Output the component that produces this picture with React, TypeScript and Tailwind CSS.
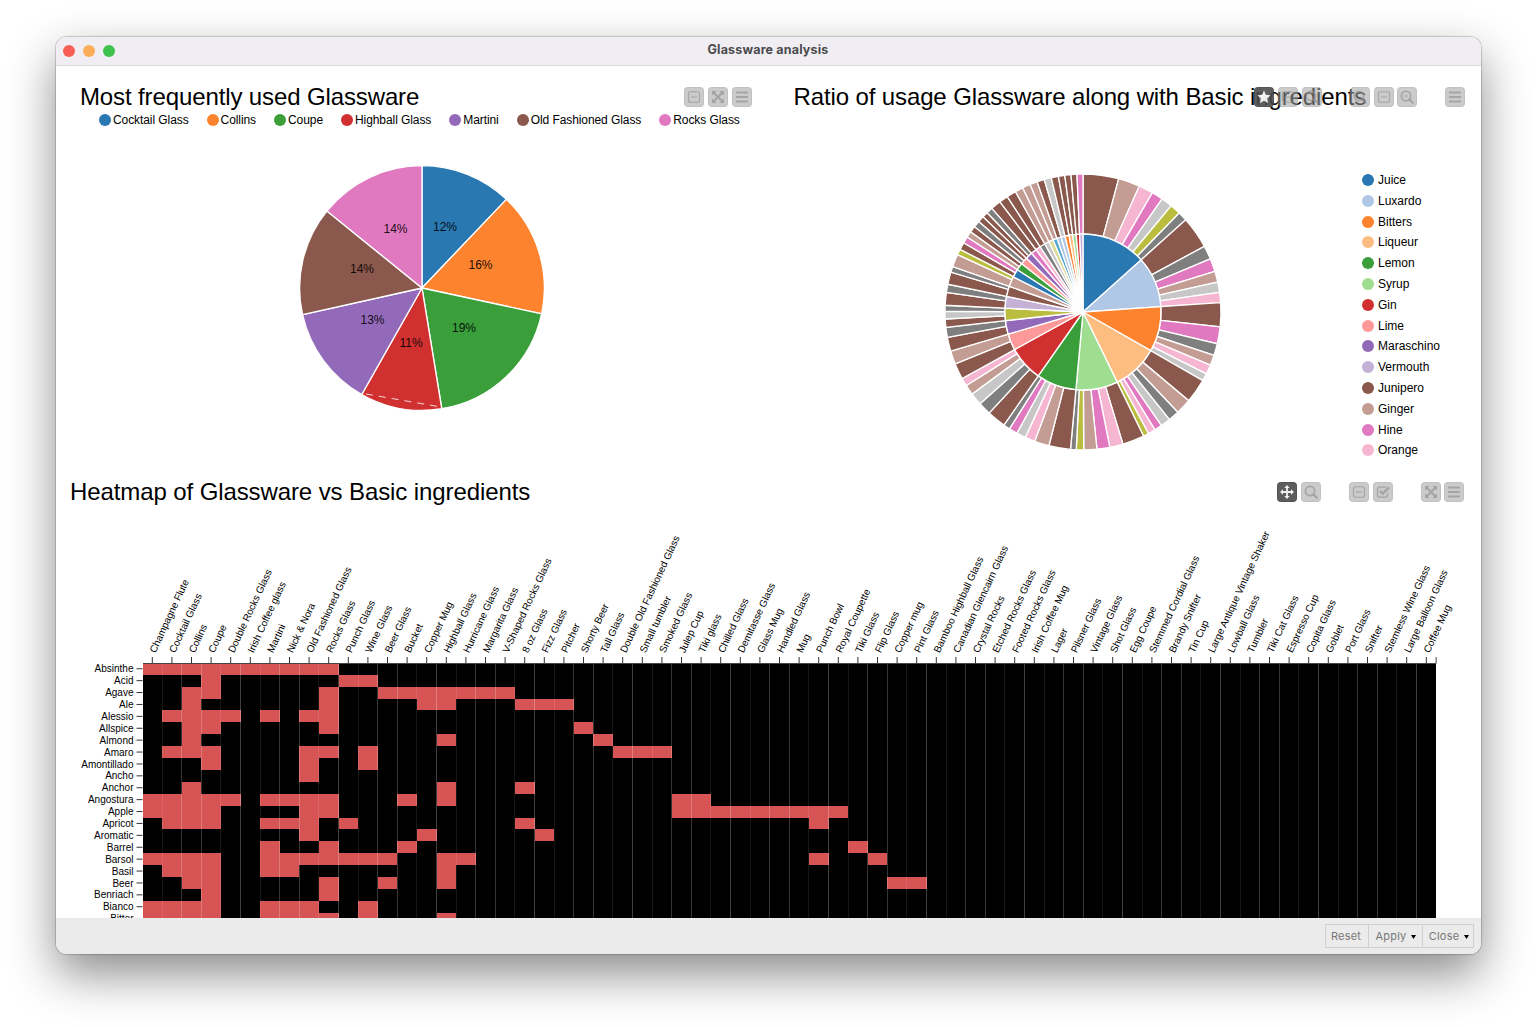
import type { ReactNode } from "react";

const C = {
  blue: "#2978b1",
  lightBlue: "#b0c8e6",
  orange: "#fd832e",
  peach: "#fdbc80",
  green: "#3a9f3a",
  lightGreen: "#9fde90",
  red: "#d13030",
  salmon: "#fd9a99",
  purple: "#9369b9",
  lilac: "#c5b1d6",
  brown: "#8a584c",
  tan: "#c39c94",
  pink: "#e079c0",
  lightPink: "#f6b6d2",
  gray: "#7f7f7f",
  lightGray: "#c7c7c7",
  olive: "#bbbd3f",
  khaki: "#dbdb93",
  cyan: "#53a8d2",
};

type Slice = { to: number; color: string };

const glassware = [
  { name: "Cocktail Glass", to: 43.6, color: C.blue, label: "12%", x: 148, y: 64 },
  { name: "Collins", to: 102.2, color: C.orange, label: "16%", x: 183.5, y: 102.4 },
  { name: "Coupe", to: 170.7, color: C.green, label: "19%", x: 167, y: 165 },
  { name: "Highball Glass", to: 209.5, color: C.red, label: "11%", x: 114, y: 180.5 },
  { name: "Martini", to: 257.4, color: C.purple, label: "13%", x: 75.5, y: 157.3 },
  { name: "Old Fashioned Glass", to: 309, color: C.brown, label: "14%", x: 65, y: 106.4 },
  { name: "Rocks Glass", to: 360, color: C.pink, label: "14%", x: 98.5, y: 66 },
];

const ingredients = [
  { name: "Juice", color: C.blue },
  { name: "Luxardo", color: C.lightBlue },
  { name: "Bitters", color: C.orange },
  { name: "Liqueur", color: C.peach },
  { name: "Lemon", color: C.green },
  { name: "Syrup", color: C.lightGreen },
  { name: "Gin", color: C.red },
  { name: "Lime", color: C.salmon },
  { name: "Maraschino", color: C.purple },
  { name: "Vermouth", color: C.lilac },
  { name: "Junipero", color: C.brown },
  { name: "Ginger", color: C.tan },
  { name: "Hine", color: C.pink },
  { name: "Orange", color: C.lightPink },
];

const toSlices = (list: [number, string][]): Slice[] => list.map(([to, color]) => ({ to, color }));

const innerRing = toSlices([
  [48.1, C.blue], [86.1, C.lightBlue], [119.7, C.orange], [154, C.peach], [185.2, C.lightGreen],
  [215, C.green], [241.2, C.red], [253.5, C.salmon], [263.6, C.purple], [272.8, C.olive],
  [281.5, C.lilac], [289.2, C.brown], [296.8, C.tan], [302.8, C.blue], [308.3, C.green],
  [313.6, C.salmon], [318.8, C.purple], [323, C.pink], [326.7, C.lightPink], [330.7, C.gray],
  [334.1, C.lightGray], [337.5, C.khaki], [340.6, C.cyan], [343.7, C.lightBlue], [346.7, C.lightBlue],
  [349.7, C.orange], [352.4, C.peach], [355, C.lightGreen], [357.5, C.red], [360, C.lilac],
]);

const outerRing = toSlices([
  [15, C.brown], [24.1, C.tan], [30.2, C.lightPink], [35, C.pink], [39.7, C.lightGray], [44.2, C.olive],
  [48.1, C.gray], [61.6, C.brown], [67.4, C.gray], [72.9, C.pink], [77.5, C.tan], [81.8, C.lightGray],
  [86.1, C.lightPink], [96.2, C.brown], [103.3, C.pink], [108.3, C.gray], [112.6, C.tan],
  [116.6, C.lightPink], [119.8, C.lightGray], [130, C.brown], [136.6, C.tan], [141.2, C.gray],
  [145.4, C.lightGray], [148.6, C.pink], [151.7, C.lightPink], [154, C.olive], [163.2, C.brown],
  [168.8, C.lightPink], [174.2, C.pink], [179.7, C.tan], [182.8, C.olive], [185.2, C.gray],
  [194.3, C.brown], [200.5, C.tan], [204.7, C.lightPink], [208.6, C.lightGray], [212.2, C.pink],
  [215, C.gray], [222.9, C.brown], [228.3, C.gray], [233.5, C.lightGray], [237.8, C.tan],
  [241.2, C.lightPink], [247.9, C.brown], [253.5, C.tan], [259.4, C.brown], [263.6, C.gray],
  [267.1, C.brown], [270.3, C.lightGray], [272.8, C.gray], [278.2, C.brown], [281.6, C.gray],
  [286.8, C.brown], [289.2, C.gray], [294.6, C.tan], [297, C.olive], [300.1, C.brown], [302.9, C.pink],
  [305.5, C.tan], [308.2, C.brown], [311, C.gray], [313.6, C.brown], [316, C.brown], [318.7, C.gray],
  [323, C.brown], [326.7, C.brown], [330.7, C.brown], [334.1, C.tan], [337.5, C.tan], [340.6, C.tan],
  [343.7, C.brown], [346.7, C.lightGray], [349.7, C.brown], [352.4, C.brown], [355, C.brown],
  [357.5, C.brown], [360, C.pink],
]);

const columns = [
  "Champagne Flute", "Cocktail Glass", "Collins", "Coupe", "Double Rocks Glass", "Irish Coffee glass",
  "Martini", "Nick & Nora", "Old Fashioned Glass", "Rocks Glass", "Punch Glass", "Wine Glass",
  "Beer Glass", "Bucket", "Copper Mug", "Highball Glass", "Hurricane Glass", "Margarita Glass",
  "V-Shaped Rocks Glass", "8 oz Glass", "Fizz Glass", "Pitcher", "Shorty Beer", "Tall Glass",
  "Double Old Fashioned Glass", "Small tumbler", "Smoked Glass", "Julep Cup", "Tiki glass",
  "Chilled Glass", "Demitasse Glass", "Glass Mug", "Handled Glass", "Mug", "Punch Bowl",
  "Royal Coupette", "Tiki Glass", "Flip Glass", "Copper mug", "Pint Glass", "Bamboo Highball Glass",
  "Canadian Glencairn Glass", "Crystal Rocks", "Etched Rocks Glass", "Footed Rocks Glass",
  "Irish Coffee Mug", "Lager", "Pilsner Glass", "Vintage Glass", "Shot Glass", "Egg Coupe",
  "Stemmed Cordial Glass", "Brandy Snifter", "Tin Cup", "Large Antique Vintage Shaker",
  "Lowball Glass", "Tumbler", "Tiki Cat Glass", "Espresso Cup", "Copita Glass", "Goblet",
  "Port Glass", "Snifter", "Stemless Wine Glass", "Large Balloon Glass", "Coffee Mug",
];

// each row lists its filled cells as [first column, last column]
const rows: { name: string; cells: [number, number][] }[] = [
  { name: "Absinthe", cells: [[0, 9]] },
  { name: "Acid", cells: [[3, 3], [10, 11]] },
  { name: "Agave", cells: [[2, 3], [9, 9], [12, 18]] },
  { name: "Ale", cells: [[2, 2], [9, 9], [14, 15], [19, 21]] },
  { name: "Alessio", cells: [[1, 4], [6, 6], [8, 9]] },
  { name: "Allspice", cells: [[2, 3], [9, 9], [22, 22]] },
  { name: "Almond", cells: [[2, 2], [15, 15], [23, 23]] },
  { name: "Amaro", cells: [[1, 3], [8, 9], [11, 11], [24, 26]] },
  { name: "Amontillado", cells: [[3, 3], [8, 8], [11, 11]] },
  { name: "Ancho", cells: [[8, 8]] },
  { name: "Anchor", cells: [[2, 2], [15, 15], [19, 19]] },
  { name: "Angostura", cells: [[0, 4], [6, 9], [13, 13], [15, 15], [27, 28]] },
  { name: "Apple", cells: [[0, 3], [8, 9], [27, 35]] },
  { name: "Apricot", cells: [[1, 3], [6, 8], [10, 10], [19, 19], [34, 34]] },
  { name: "Aromatic", cells: [[8, 8], [14, 14], [20, 20]] },
  { name: "Barrel", cells: [[6, 6], [9, 9], [13, 13], [36, 36]] },
  { name: "Barsol", cells: [[0, 3], [6, 12], [15, 16], [34, 34], [37, 37]] },
  { name: "Basil", cells: [[1, 3], [6, 7], [15, 15]] },
  { name: "Beer", cells: [[2, 3], [9, 9], [12, 12], [15, 15], [38, 39]] },
  { name: "Benriach", cells: [[3, 3], [9, 9]] },
  { name: "Bianco", cells: [[0, 3], [6, 8], [11, 11]] },
  { name: "Bitter", cells: [[0, 3], [6, 9], [11, 11], [15, 15]] },
];

const point = (c: number, r: number, deg: number) => {
  const a = (deg * Math.PI) / 180;
  return `${(c + r * Math.sin(a)).toFixed(2)} ${(c - r * Math.cos(a)).toFixed(2)}`;
};

const arc = (c: number, r0: number, r1: number, from: number, to: number) =>
  `M${point(c, r0, from)} L${point(c, r1, from)} A${r1} ${r1} 0 0 1 ${point(c, r1, to)} L${point(c, r0, to)}` +
  (r0 > 0 ? ` A${r0} ${r0} 0 0 0 ${point(c, r0, from)}Z` : "Z");

const Ring = ({ slices, c, r0, r1 }: { slices: Slice[]; c: number; r0: number; r1: number }) => (
  <g stroke="#fff" strokeWidth="1.35">
    {slices.map((s, i) => (
      <path key={i} d={arc(c, r0, r1, i ? slices[i - 1].to : 0, s.to)} fill={s.color} />
    ))}
  </g>
);

const icons: Record<string, ReactNode> = {
  star: <path fill="currentColor" d="M7 .6l2 4.1 4.5.6-3.3 3.1.8 4.5L7 10.8l-4 2.1.8-4.5L.5 5.3 5 4.7z" />,
  minus: (
    <g fill="none" stroke="currentColor" strokeWidth="1.1">
      <rect x="1.5" y="1.8" width="11" height="10.4" rx="2" />
      <path d="M4 7h6" />
    </g>
  ),
  check: (
    <g fill="none" stroke="currentColor">
      <path strokeWidth="1.3" d="M11.5 8v2.2a2 2 0 01-2 2h-6a2 2 0 01-2-2v-6a2 2 0 012-2h6.5" />
      <path strokeWidth="2.4" d="M4 5.8l2.8 2.8L13 2.4" />
    </g>
  ),
  expand: (
    <g fill="currentColor">
      <path d="M1 1h4.6L1 5.6zM13 1v4.6L8.4 1zM1 13V8.4L5.6 13zM13 13H8.4L13 8.4z" />
      <path stroke="currentColor" strokeWidth="2" d="M3 3l8 8M11 3l-8 8" />
    </g>
  ),
  move: (
    <g fill="currentColor">
      <path d="M7 0l2.7 3H4.3zM7 14l2.7-3H4.3zM0 7l3-2.7v5.4zM14 7l-3-2.7v5.4z" />
      <path stroke="currentColor" strokeWidth="1.8" d="M7 2v10M2 7h10" />
    </g>
  ),
  search: (
    <g fill="none" stroke="currentColor">
      <circle cx="6" cy="6" r="4.6" strokeWidth="1.7" />
      <path strokeWidth="2.2" strokeLinecap="round" d="M9.7 9.7l3 3" />
    </g>
  ),
  zoomOut: (
    <g fill="none" stroke="currentColor">
      <circle cx="6" cy="6" r="4.7" strokeWidth="1.6" />
      <path strokeWidth="1.2" d="M3.8 6h4.4" />
      <path strokeWidth="2.2" strokeLinecap="round" d="M9.7 9.7l3 3" />
    </g>
  ),
  bars: <path stroke="currentColor" strokeWidth="1.9" d="M1 2.5h12M1 7h12M1 11.5h12" />,
};

const ToolButton = ({ icon, active }: { icon: string; active?: boolean }) => (
  <button
    className={
      active
        ? "flex size-5 items-center justify-center rounded-[4px] border border-black/10 bg-[#4c4c4c]/90 text-white/90"
        : "flex size-5 items-center justify-center rounded-[4px] border border-black/5 bg-[#a0a0a0]/55 text-[#909090]/65"
    }
  >
    <svg viewBox="0 0 14 14" className="size-[14px] shrink-0">{icons[icon]}</svg>
  </button>
);

const Toolbar = ({ groups, active }: { groups: string[][]; active?: string }) => (
  <div className="flex gap-7">
    {groups.map((group, g) => (
      <div key={g} className="flex gap-[3.8px]">
        {group.map((icon, i) => (
          <ToolButton key={i} icon={icon} active={icon === active} />
        ))}
      </div>
    ))}
  </div>
);

const UsagePie = () => (
  <section className="relative w-[712px] shrink-0">
    <h2 className="pt-[13px] pl-6 text-[24px] leading-9 tracking-[-0.12px] whitespace-nowrap">Most frequently used Glassware</h2>
    <div className="absolute top-[21px] right-[16.4px]">
      <Toolbar groups={[["minus", "expand", "bars"]]} />
    </div>
    <ul className="-mt-px flex gap-[18px] pl-[43px] text-[12px] leading-[10px] tracking-[-0.08px]">
      {glassware.map((g) => (
        <li key={g.name} className="flex items-center gap-[2px] whitespace-nowrap">
          <svg className="size-3" viewBox="0 0 12 12">
            <circle cx="6" cy="6" r="6" fill={g.color} />
          </svg>
          {g.name}
        </li>
      ))}
    </ul>
    <svg className="mt-[36.5px] ml-[241px] size-[250px]" viewBox="0 0 250 250">
      <Ring slices={glassware} c={125} r0={0} r1={122.4} />
      <path d="M69 231L144 244" stroke="#fff" strokeOpacity=".8" strokeDasharray="7 6" />
      <g fontSize="12" textAnchor="middle" fillOpacity=".9">
        {glassware.map((g) => (
          <text key={g.name} x={g.x} y={g.y + 3.5}>{g.label}</text>
        ))}
      </g>
    </svg>
  </section>
);

const RatioSunburst = () => (
  <section className="relative flex-1">
    <h2 className="pt-[13px] pl-[25.5px] text-[24px] leading-9 tracking-[-0.12px] whitespace-nowrap">
      Ratio of usage Glassware along with Basic ingredients
    </h2>
    <div className="absolute top-[21px] right-[15.6px]">
      <Toolbar groups={[["star", "minus", "search"], ["search", "minus", "zoomOut"], ["bars"]]} active="star" />
    </div>
    <div className="mt-[55px] flex pl-[175px]">
      <svg className="mt-[2px] size-[280px]" viewBox="0 0 280 280">
        <Ring slices={outerRing} c={140} r0={78} r1={138} />
        <Ring slices={innerRing} c={140} r0={0} r1={78} />
      </svg>
      <ul className="-mt-[0.4px] ml-[138.5px] text-[12px]">
        {ingredients.map((item) => (
          <li key={item.name} className="flex h-[20.8px] items-center gap-[4.5px]">
            <svg className="size-3" viewBox="0 0 12 12">
              <circle cx="6" cy="6" r="6" fill={item.color} />
            </svg>
            {item.name}
          </li>
        ))}
      </ul>
    </div>
  </section>
);

// heatmap geometry, relative to the chart's svg
const X0 = 86.5;
const Y0 = 142.8;
const CELL_W = 19.6;
const CELL_H = 11.9;
const X1 = X0 + CELL_W * columns.length;

const Heatmap = () => (
  <section className="relative h-[448px] overflow-hidden">
    <h2 className="h-[50px] pt-1 pl-[14px] text-[24px] leading-9 tracking-[-0.1px]">Heatmap of Glassware vs Basic ingredients</h2>
    <div className="absolute top-[12px] right-[16.6px]">
      <Toolbar groups={[["move", "search"], ["minus", "check"], ["expand", "bars"]]} active="move" />
    </div>
    <svg width="1425" height="398" className="block" fontSize="10">
      <g shapeRendering="crispEdges">
        <rect x={X0 + 0.5} y={Y0} width={X1 - X0 - 0.5} height="260" />
        {rows.map((row, r) =>
          row.cells.map(([from, to]) => (
            <rect
              key={`${r}-${from}`}
              x={from ? X0 + from * CELL_W : X0 + 0.5}
              y={Y0 + r * CELL_H}
              width={(to - from + 1) * CELL_W - (from ? 0 : 0.5)}
              height={CELL_H}
              fill="#d65554"
            />
          ))
        )}
      </g>
      {columns.map((name, i) => {
        const x = X0 + i * CELL_W;
        const f = x - Math.floor(x);
        const tick = x + CELL_W / 2;
        return (
          <g key={name}>
            {i > 0 && <rect x={Math.floor(x)} y={Y0} width="1" height="260" fill="#fff" opacity={f * (1 - f)} />}
            <path d={`M${tick} 137V143`} stroke="#333" />
            <text transform={`translate(${tick + 3.2} 133.5) rotate(-65)`}>{name}</text>
          </g>
        );
      })}
      <path d={`M${X0 + 0.5} 143.5H${X1}V137`} fill="none" stroke="#444" />
      {rows.map((row, r) => {
        const y = Y0 + (r + 0.5) * CELL_H;
        return (
          <g key={row.name}>
            <path d={`M80.5 ${y}H86.5`} stroke="#333" />
            <text x="77.5" y={y + 3.6} textAnchor="end">{row.name}</text>
          </g>
        );
      })}
    </svg>
  </section>
);

const App = () => {
  return (
    <div className="h-[1027px] w-[1536px] overflow-hidden bg-white pt-[37px] pl-[56px] font-['Liberation_Sans',Arial,sans-serif] text-black">
      <div className="flex h-[917px] w-[1425px] flex-col overflow-hidden rounded-[11px] bg-white shadow-[0_0_1px_1px_rgba(0,0,0,0.18),0_20px_48px_rgba(0,0,0,0.46)]">
        <header className="flex h-[29px] shrink-0 items-center border-b border-[#dcdadf] bg-[#f0eef3] pl-[7px]">
          <div className="flex w-[70px] gap-2">
            <span className="size-3 rounded-full bg-[#f95e57]" />
            <span className="size-3 rounded-full bg-[#fbae57]" />
            <span className="size-3 rounded-full bg-[#3dc34c]" />
          </div>
          <h1 className="flex-1 pr-[78px] pb-px text-center font-['Inter',sans-serif] text-[12.5px] font-bold tracking-[0.17px] text-[#4b4a4d]">
            Glassware analysis
          </h1>
        </header>
        <main className="flex-1 overflow-hidden">
          <div className="flex h-[404px]">
            <UsagePie />
            <RatioSunburst />
          </div>
          <Heatmap />
        </main>
        <footer className="flex h-9 shrink-0 items-start justify-end bg-[#ebebeb] pt-[6px] pr-[7px] font-['Inter',sans-serif] text-[11px] tracking-[0.2px] text-[#777]">
          <div className="flex h-6 divide-x divide-[#d0d0d0] border border-[#d0d0d0]">
            <button className="w-[43px] pr-[2px]">Reset</button>
            <button className="flex w-[54px] items-center justify-center gap-[5px] pl-px">
              Apply
              <svg viewBox="0 0 5 4" className="mt-[2px] h-1 w-[5px] text-black"><path fill="currentColor" d="M0 0h5L2.5 4z" /></svg>
            </button>
            <button className="flex w-[50px] items-center justify-center gap-[5px] pl-[2px]">
              Close
              <svg viewBox="0 0 5 4" className="mt-[2px] h-1 w-[5px] text-black"><path fill="currentColor" d="M0 0h5L2.5 4z" /></svg>
            </button>
          </div>
        </footer>
      </div>
    </div>
  );
};

export default App;
